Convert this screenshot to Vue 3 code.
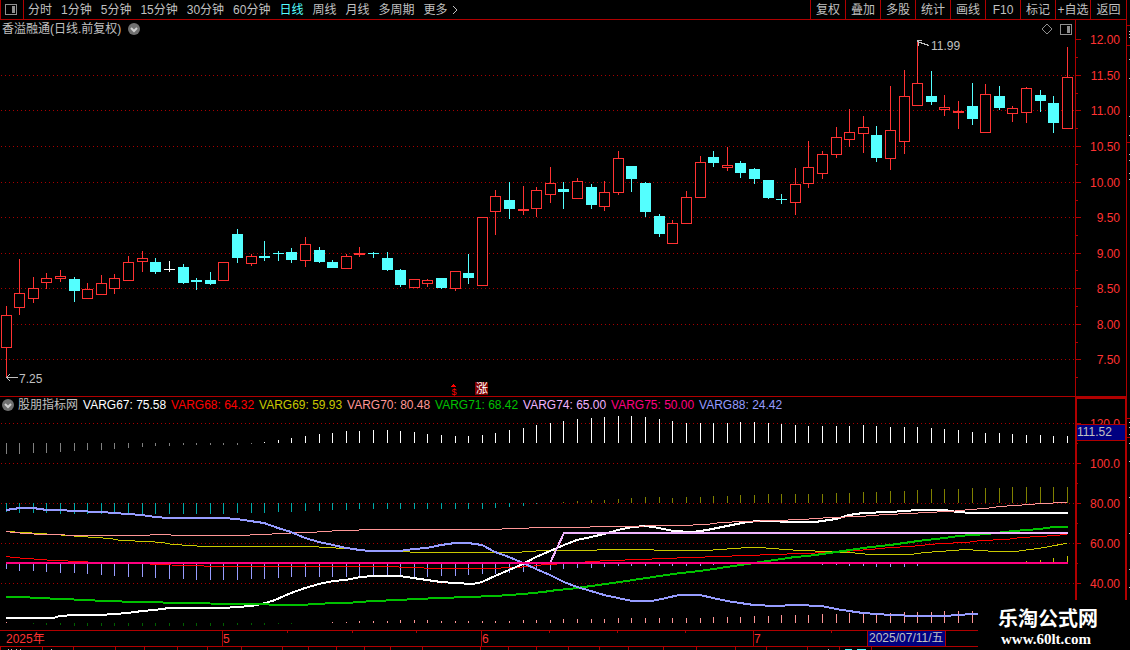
<script setup>
const periods = ['分时', '1分钟', '5分钟', '15分钟', '30分钟', '60分钟', '日线', '周线', '月线', '多周期']
const tools = ['复权', '叠加', '多股', '统计', '画线', 'F10', '标记', '+自选', '返回']

const indicators = [
  { name: 'VARG67', value: '75.58', tone: 'white' },
  { name: 'VARG68', value: '64.32', tone: 'red' },
  { name: 'VARG69', value: '59.93', tone: 'yellow' },
  { name: 'VARG70', value: '80.48', tone: 'salmon' },
  { name: 'VARG71', value: '68.42', tone: 'green' },
  { name: 'VARG74', value: '65.00', tone: 'lilac' },
  { name: 'VARG75', value: '50.00', tone: 'pink' },
  { name: 'VARG88', value: '24.42', tone: 'blue' }
]

const slot = i => Math.floor(6.15 + 13.605 * i)

// kind, high, body top, body bottom, low
const candleRows = [
  ['r', 306, 315, 347, 376], ['r', 259, 293, 307, 314], ['r', 277, 288, 298, 302], ['r', 273, 278, 282, 288],
  ['r', 270, 276, 278, 281], ['c', 277, 279, 291, 302], ['r', 283, 289, 298, 298], ['r', 275, 283, 294, 294],
  ['r', 274, 278, 288, 293], ['r', 256, 262, 280, 280], ['r', 251, 258, 261, 271], ['c', 258, 262, 272, 274],
  ['w', 261, 269, 270, 272], ['c', 264, 267, 283, 284], ['c', 278, 280, 282, 290], ['c', 272, 280, 284, 285],
  ['r', 262, 262, 280, 280], ['c', 229, 234, 258, 263], ['r', 254, 256, 263, 265], ['c', 241, 256, 258, 261],
  ['c', 251, 253, 254, 261], ['c', 248, 252, 260, 263], ['r', 237, 244, 260, 266], ['c', 247, 250, 262, 263],
  ['c', 260, 262, 268, 268], ['r', 254, 256, 268, 268], ['r', 247, 253, 254, 256], ['c', 252, 253, 254, 258],
  ['c', 252, 258, 270, 271], ['c', 269, 270, 285, 287], ['r', 279, 279, 287, 287], ['r', 279, 280, 283, 286],
  ['c', 278, 278, 288, 289], ['r', 271, 271, 288, 290], ['c', 254, 273, 278, 284], ['r', 217, 217, 285, 285],
  ['r', 190, 196, 211, 234], ['c', 182, 200, 209, 219], ['r', 186, 209, 210, 214], ['r', 187, 190, 208, 216],
  ['r', 167, 183, 194, 202], ['c', 182, 189, 192, 209], ['r', 178, 181, 198, 198], ['c', 184, 187, 205, 209],
  ['r', 181, 192, 206, 210], ['r', 151, 158, 192, 194], ['c', 166, 166, 179, 192], ['c', 182, 183, 212, 217],
  ['c', 214, 216, 234, 237], ['r', 220, 223, 243, 243], ['r', 191, 197, 223, 223], ['r', 156, 162, 197, 197],
  ['c', 151, 157, 163, 167], ['r', 147, 165, 167, 170], ['c', 161, 163, 173, 178], ['c', 168, 169, 179, 184],
  ['c', 180, 180, 198, 199], ['c', 194, 199, 200, 204], ['r', 168, 184, 202, 214], ['r', 141, 167, 183, 187],
  ['r', 151, 154, 173, 178], ['r', 127, 137, 154, 157], ['r', 109, 132, 139, 146], ['r', 116, 127, 133, 152],
  ['c', 126, 135, 158, 162], ['r', 86, 130, 158, 169], ['r', 70, 96, 141, 153], ['r', 42, 83, 105, 105],
  ['c', 71, 96, 102, 105], ['r', 95, 107, 109, 115], ['r', 101, 111, 112, 128], ['c', 83, 106, 119, 125],
  ['r', 84, 94, 132, 132], ['c', 86, 96, 108, 110], ['r', 106, 108, 113, 121], ['r', 87, 88, 112, 122],
  ['c', 90, 95, 101, 112], ['c', 96, 103, 123, 133], ['r', 47, 77, 128, 128]
]
const candles = candleRows.map(([kind, high, top, bottom, low], i) => ({ kind, high, top, bottom, low, x: slot(i) }))

const priceTicks = [
  ['12.00', 39], ['11.50', 75], ['11.00', 110], ['10.50', 146], ['10.00', 182],
  ['9.50', 217], ['9.00', 253], ['8.50', 288], ['8.00', 324], ['7.50', 359]
]
const priceMinor = [57, 93, 128, 164, 200, 235, 270, 306, 342, 377]
const levelTicks = [['120.0', 423], ['100.0', 463], ['80.00', 503], ['60.00', 543], ['40.00', 583]]
const levelMinor = [443, 483, 523, 563]

const bars = (tone, base, from, ends) =>
  ends.map((end, k) => ({ tone, x: slot(from + k), y: Math.min(base, end), h: Math.abs(end - base) }))

const histogram = [
  ...bars('gray', 443, 0, [454, 454, 453, 453, 452, 451, 450, 450, 449, 448, 447, 446, 446, 445, 445, 445, 445, 445, 444]),
  ...bars('white', 443, 19, [442, 440, 438, 436, 434, 433, 431, 431, 430, 430, 431, 432, 434, 435, 436, 436, 435, 433, 430, 428,
    425, 423, 421, 419, 418, 417, 416, 416, 417, 419, 421, 423, 423, 423, 423, 422, 422, 423, 424, 425, 426, 426, 426, 426, 425,
    426, 427, 427, 427, 428, 429, 430, 432, 433, 433, 434, 435, 435, 436, 436]),
  ...bars('teal', 503, 0, [512, 513, 513, 513, 514, 514, 514, 514, 514, 514, 514, 514, 514, 514, 514, 514, 514, 513, 513, 513,
    512, 512, 511, 511, 510, 510, 509, 509, 509, 509, 509, 509, 509, 509, 509, 509, 508, 507, 506, 504]),
  ...bars('olive', 503, 41, [502, 501, 500, 500, 499, 498, 497, 497, 498, 497, 497, 496, 496, 495, 495, 494, 494, 494, 494, 494,
    493, 493, 492, 492, 491, 491, 490, 489, 489, 489, 488, 488, 488, 487, 487, 487, 487, 487]),
  ...bars('blue', 563, 0, [569, 571, 571, 572, 573, 573, 574, 575, 576, 577, 577, 578, 579, 579, 580, 580, 580, 580, 579, 579,
    578, 577, 577, 577, 577, 577, 577, 577, 577, 577, 577, 577, 576, 576, 575, 574, 574, 573, 572, 570, 570, 569, 568, 568, 567,
    566, 566, 566, 566, 566, 566, 566, 565]),
  ...bars('blue', 563, 60, [565, 565, 566, 566, 567, 567, 567, 566]),
  ...bars('yellow', 563, 75, [561, 560, 558, 556]),
  ...bars('salmon', 623, 0, [622]),
  ...bars('moss', 623, 2, [624, 625, 625, 626, 626, 626, 626, 626, 626, 626, 626, 626, 626, 626, 626, 625, 625, 625, 624, 624]),
  ...bars('salmon', 623, 24, [622, 622, 621, 621, 621, 620, 620, 620, 621, 621, 621, 621, 621, 621, 620, 620, 620, 619, 619, 619,
    619, 618, 618, 618, 618, 618, 618, 618, 617, 617, 617, 616, 616, 615, 615, 615, 614, 614, 613, 613, 613, 613, 612, 612, 612,
    611, 611, 611])
]

const curves = [
  { tone: 'yellow', w: 1, pts: '6,531 40,533 68,535 80,536 95,537 110,538 121,540 148,541 162,542 173,544 190,545 204,546 285,546 312,546 325,547 346,548 370,550 400,551 420,552 515,552 530,551 543,550 584,550 610,549 652,549 656,550 706,550 720,549 735,548 748,547 760,547 785,549 800,550 830,551 850,552 870,554 910,554 925,552 940,551 965,549 995,551 1015,551 1030,549 1045,547 1060,544 1067,543' },
  { tone: 'red', w: 1, pts: '6,556 13,557 27,558 40,559 54,560 81,561 95,562 148,563 152,564 190,565 217,566 390,566 408,567 440,568 488,568 515,567 530,566 545,564 570,563 590,561 610,560 640,559 690,557 720,556 745,555 775,554 800,553 830,552 870,549 890,547 910,546 940,543 967,542 980,540 1007,539 1020,537 1040,536 1067,534' },
  { tone: 'white', w: 2, pts: '6,618 53,618 60,616 75,615 100,615 114,614 128,613 142,611 155,610 169,608 196,608 223,608 237,607 251,606 262,604 275,600 291,593 305,588 319,584 333,581 346,580 360,577 375,576 400,576 413,578 427,580 441,582 455,583 473,584 482,582 495,576 509,570 523,564 536,557 550,551 564,545 577,540 591,537 604,534 618,530 632,527 646,526 659,528 673,531 693,532 707,530 727,526 747,522 760,521 775,521 785,522 815,522 822,521 836,519 849,515 863,513 890,512 904,511 918,510 945,510 957,512 972,513 1068,513' },
  { tone: 'salmon', w: 1, pts: '6,531 13,532 27,533 40,534 90,535 148,535 152,534 190,535 230,535 270,534 274,533 310,532 340,530 379,529 400,529 488,529 543,527 570,527 611,526 680,525 707,524 720,522 745,521 775,520 802,519 830,517 860,516 885,514 912,513 925,512 950,511 970,509 985,508 1000,506 1030,504 1040,503 1067,502' },
  { tone: 'green', w: 2, pts: '6,597 20,597 60,599 88,600 101,601 142,602 183,603 237,604 300,605 333,603 346,603 373,601 400,600 415,599 441,598 468,597 495,596 523,594 543,592 557,590 570,589 584,587 613,583 633,580 653,577 673,574 700,571 720,568 740,565 768,561 795,557 808,556 822,554 850,550 863,548 890,545 918,541 945,538 958,536 987,534 1013,531 1040,529 1053,527 1068,527' },
  { tone: 'lilac', w: 2, pts: '550,563 564,533 1068,533' },
  { tone: 'blue', w: 2, pts: '6,510 13,509 20,508 33,508 47,510 60,510 74,511 101,512 114,513 128,514 142,515 155,517 169,518 223,518 237,519 250,521 264,523 278,528 291,532 305,538 319,542 333,545 346,548 360,550 370,551 400,551 413,549 427,548 441,545 455,543 468,543 482,545 495,552 509,557 523,563 536,569 550,575 564,582 577,587 591,591 604,595 618,598 632,601 652,601 666,598 679,595 700,595 713,598 727,601 740,603 754,605 775,606 795,605 822,606 836,609 849,611 863,613 877,614 890,615 917,616 945,616 958,615 972,614 980,614' },
  { tone: 'pink', w: 2, pts: '6,563 1068,563' }
]

const months = [['5', 222], ['6', 481], ['7', 753]]
const weekTicks = [287, 352, 416, 549, 617, 685, 831]
const rulerTicks = [0, 42, 73, 115, 144, 177, 207, 241, 282, 308, 336, 364, 390, 422, 480, 508, 536, 568, 599, 628, 663, 696, 735, 766, 807, 839, 871]
</script>

<template>
  <main class="terminal">
    <header class="topbar">
      <button class="layout-btn" type="button" aria-label="布局">
        <svg width="12" height="11" viewBox="0 0 12 11" shape-rendering="crispEdges">
          <rect x="0.5" y="0.5" width="11" height="10" rx="1" class="icon-line" />
          <rect x="7" y="2" width="3" height="7" class="icon-fill" />
        </svg>
      </button>
      <nav class="periods">
        <button v-for="p in periods" :key="p" type="button" :class="{ active: p === '日线' }">{{ p }}</button>
        <button type="button" class="more">更多
          <svg width="6" height="10" viewBox="0 0 6 10"><path d="M1 1 L5 5 L1 9" class="more-line" /></svg>
        </button>
      </nav>
      <div class="tools">
        <button v-for="t in tools" :key="t" type="button">{{ t }}</button>
      </div>
    </header>

    <section class="panel">
      <div class="caption">
        <h1>香溢融通(日线.前复权)</h1>
        <button type="button" class="round" aria-label="展开">
          <svg width="12" height="12" viewBox="0 0 12 12"><circle cx="6" cy="6" r="6" class="disc" /><path d="M3 5 L6 8 L9 5" class="tickmark" /></svg>
        </button>
        <div class="corner">
          <svg width="12" height="12" viewBox="0 0 12 12"><path d="M6 1 L11 6 L6 11 L1 6 Z" class="icon-line" /></svg>
          <svg width="12" height="11" viewBox="0 0 12 11" shape-rendering="crispEdges">
            <rect x="0.5" y="0.5" width="11" height="10" rx="1" class="icon-line" />
            <rect x="7" y="2" width="3" height="7" class="icon-fill" />
          </svg>
        </div>
      </div>
      <svg class="chart" viewBox="0 20 1130 377" shape-rendering="crispEdges">
        <line v-for="t in priceTicks.slice(1)" :key="t[0]" x1="1" x2="1075" :y1="t[1] + 0.5" :y2="t[1] + 0.5" class="grid" />
        <g v-for="c in candles" :key="c.x" :class="'k-' + c.kind">
          <rect class="wick" :x="c.x" :y="c.high" width="1" :height="c.low - c.high + (c.kind === 'r' ? 1 : 0)" />
          <rect v-if="c.kind === 'r'" class="body" :x="c.x - 4.5" :y="c.top + 0.5" width="10" :height="c.bottom - c.top" />
          <rect v-else class="body" :x="c.x - 5" :y="c.top" width="11" :height="c.bottom - c.top" />
        </g>
        <path d="M6 377.5 H18 M7 377 L10 374 M7 378 L10 381" class="pointer" />
        <text x="19" y="383" class="note">7.25</text>
        <path d="M917 41.5 L929 45.5 M917 40.5 H922 M918 41 V46" class="pointer" />
        <text x="931" y="50" class="note">11.99</text>
        <path d="M453 384 H454 V385 H455 V386 H456 V387 H451 V386 H452 V385 H453 Z" class="flag" />
        <text x="454" y="395" class="dollar">$</text>
        <path d="M475 382 H486 L488 384 V395 H475 Z" class="rise-box" />
        <text x="482" y="393" class="rise">涨</text>
        <rect x="1075" y="20" width="1" height="377" class="rule" />
        <g v-for="t in priceTicks" :key="'p' + t[0]">
          <rect x="1076" :y="t[1]" width="5" height="1" class="rule" />
          <text x="1120" :y="t[1] + 5" class="scale">{{ t[0] }}</text>
        </g>
        <rect v-for="y in priceMinor" :key="'m' + y" x="1076" :y="y" width="2" height="1" class="rule" />
        <rect x="1126" y="20" width="1" height="377" class="rule" />
        <rect x="0" y="396" width="1127" height="1" class="rule" />
        <path d="M1127 25.5 H1130 M1127 45.5 H1130 M1127 142.5 H1130" class="edge" />
        <path d="M1129.5 31 V32 M1129.5 34 V35 M1129.5 37 V38 M1129.5 59 V60 M1129.5 78 V79 M1129.5 116 V117 M1129.5 135 V136 M1129.5 154 V155 M1129.5 160 V161 M1129.5 173 V174 M1129.5 179 V180" class="specks" />
      </svg>
    </section>

    <section class="panel">
      <div class="caption lower">
        <button type="button" class="round" aria-label="指标菜单">
          <svg width="12" height="12" viewBox="0 0 12 12"><circle cx="6" cy="6" r="6" class="disc" /><path d="M3 5 L6 8 L9 5" class="tickmark" /></svg>
        </button>
        <h2>股朋指标网</h2>
        <ul class="legend">
          <li v-for="i in indicators" :key="i.name" :class="'t-' + i.tone">{{ i.name }}: {{ i.value }}</li>
        </ul>
      </div>
      <svg class="chart" viewBox="0 397 1130 253" shape-rendering="crispEdges">
        <line v-for="t in levelTicks" :key="t[0]" x1="1" x2="1075" :y1="t[1] + 0.5" :y2="t[1] + 0.5" class="grid" />
        <rect v-for="(b, n) in histogram" :key="n" :x="b.x" :y="b.y" width="1" :height="b.h" :class="'f-' + b.tone" />
        <polyline
          v-for="c in curves"
          :key="c.tone"
          :points="c.pts"
          :stroke-width="c.w"
          :transform="c.w === 1 ? 'translate(0 0.5)' : undefined"
          :class="'curve s-' + c.tone"
        />

        <g v-for="t in levelTicks" :key="'l' + t[0]">
          <rect x="1077" :y="t[1]" width="4" height="1" class="rule" />
          <text x="1120" :y="t[1] + 5" class="scale">{{ t[0] }}</text>
        </g>
        <rect v-for="y in levelMinor" :key="'n' + y" x="1077" :y="y" width="1" height="1" class="rule" />
        <rect x="1077" y="424" width="48" height="17" class="navy" />
        <path d="M1077 424.5 H1125 M1077 440.5 H1125" class="edge" />
        <path d="M1075 397 H1127 V600 H1125 V399 H1077 V600 H1075 Z" class="rule" />
        <text x="1077" y="436" class="note">111.52</text>
        <path d="M1127 418.5 H1130 M1127 437.5 H1130" class="edge" />
        <path d="M1129.5 422 V423 M1129.5 427 V428 M1129.5 434 V435 M1129.5 443 V444 M1129.5 461 V462 M1129.5 497 V498 M1129.5 533 V534 M1129.5 569 V570 M1129.5 587 V588" class="specks" />

        <path d="M0 630.5 H1130 M0 646.5 H1130" class="edge" />
        <rect v-for="x in weekTicks" :key="'w' + x" :x="x" y="631" width="1" height="2" class="rule" />
        <rect v-for="x in rulerTicks" :key="'r' + x" :x="x" y="647" width="1" height="3" class="rule" />
        <text x="6" y="643" class="stamp">2025年</text>
        <g v-for="m in months" :key="'mo' + m[0]">
          <rect :x="m[1]" y="631" width="1" height="15" class="rule" />
          <text :x="m[1] + 1" y="643" class="stamp">{{ m[0] }}</text>
        </g>
        <rect x="867" y="630" width="79" height="17" class="rule" />
        <rect x="868" y="631" width="77" height="15" class="navy" />
        <text x="869" y="642" class="note">2025/07/11/五</text>
        <path d="M8 649.5 H9 M11 649.5 H12 M16 649.5 H17 M20 649.5 H21 M51 649.5 H52 M828 649.5 H829" class="specks" />
        <path d="M845 649.5 H852 M857 649.5 H866" class="cyan-specks" />
      </svg>
      <a class="badge" href="#">
        <strong>乐淘公式网</strong>
        <span>www.60lt.com</span>
      </a>
    </section>
  </main>
</template>

<style>
html,
body {
  margin: 0;
  background: #000;
}
</style>

<style scoped>
.terminal {
  min-height: 100vh;
  overflow: hidden;
  background: #000;
  color: #c0c0c0;
  font: 12px/18px "Liberation Sans", "Noto Sans CJK SC", sans-serif;
}
button {
  margin: 0;
  padding: 0;
  border: 0;
  background: none;
  color: inherit;
  font: inherit;
  white-space: nowrap;
}
svg {
  display: block;
}
.topbar {
  display: flex;
  height: 19px;
  margin-right: 3px;
  border: solid #b00000;
  border-width: 0 1px 1px;
}
.layout-btn {
  display: flex;
  align-items: center;
  padding: 0 6px 1px 4px;
  border-right: 1px solid #b00000;
}
.periods {
  display: flex;
  flex: 1;
  gap: 9px;
  padding-left: 4px;
}
.active {
  color: #54ffff;
}
.more {
  display: flex;
  align-items: center;
  gap: 4px;
}
.more-line {
  fill: none;
  stroke: #c0c0c0;
}
.tools {
  display: grid;
  grid-template-columns: repeat(8, 35px) 36px;
}
.tools button {
  border-left: 1px solid #b00000;
}
.panel {
  position: relative;
}
.chart {
  width: 100%;
  height: auto;
}
.caption {
  position: absolute;
  inset: 0 54px auto 0;
  display: flex;
  align-items: center;
  height: 18px;
  padding-left: 2px;
}
.caption h1,
.caption h2 {
  margin: 0;
  font-size: 12px;
  font-weight: normal;
}
.caption h1 {
  margin-right: 7px;
}
.lower h2 {
  margin: 0 5px 0 4px;
}
.lower {
  height: 16px;
}
.corner {
  display: flex;
  align-items: center;
  gap: 7px;
  margin-left: auto;
  padding-right: 4px;
}
.legend {
  display: grid;
  grid-template-columns: repeat(8, 88px);
  margin: 0;
  padding: 0;
  list-style: none;
  white-space: nowrap;
}
.icon-line {
  fill: none;
  stroke: #909090;
}
.icon-fill {
  fill: #909090;
}
.disc {
  fill: #707070;
}
.tickmark {
  fill: none;
  stroke: #d0d0d0;
  stroke-width: 2;
}
.grid {
  stroke: #a80000;
  stroke-dasharray: 1 3;
}
.rule {
  fill: #b00000;
}
.edge {
  fill: none;
  stroke: #b00000;
}
.specks {
  stroke: #c0c0c0;
}
.cyan-specks {
  stroke: #54ffff;
}
.navy {
  fill: #000080;
}
.k-r .wick {
  fill: #ff3232;
}
.k-r .body {
  fill: #000;
  stroke: #ff3232;
}
.k-c rect {
  fill: #54ffff;
}
.k-w rect {
  fill: #fff;
}
.pointer {
  fill: none;
  stroke: #c0c0c0;
}
.note {
  fill: #c0c0c0;
}
.scale,
.stamp {
  fill: #ff3232;
}
.scale {
  text-anchor: end;
}
.flag {
  fill: #f00;
}
.dollar {
  fill: #f00;
  font-size: 9px;
  text-anchor: middle;
}
.rise-box {
  fill: #800000;
}
.rise {
  fill: #fff;
  font-size: 12px;
  text-anchor: middle;
}
.curve {
  fill: none;
}
.t-white { color: #fff; }
.t-red { color: #f00; }
.t-yellow { color: #c8c800; }
.t-salmon { color: #ff9696; }
.t-green { color: #00c000; }
.t-lilac { color: #f0b4ff; }
.t-pink { color: #ff0080; }
.t-blue { color: #969cff; }
.s-white { stroke: #fff; }
.s-red { stroke: #f00; }
.s-yellow { stroke: #c8c800; }
.s-salmon { stroke: #ff9696; }
.s-green { stroke: #00c000; }
.s-lilac { stroke: #f0b4ff; }
.s-pink { stroke: #ff0080; }
.s-blue { stroke: #969cff; }
.f-gray { fill: #808080; }
.f-white { fill: #fff; }
.f-teal { fill: #00a8a8; }
.f-olive { fill: #808000; }
.f-blue { fill: #969cff; }
.f-yellow { fill: #c8c800; }
.f-salmon { fill: #ff9696; }
.f-moss { fill: #006000; }
.badge {
  position: absolute;
  right: 0;
  bottom: 0;
  display: flex;
  flex-direction: column;
  width: 132px;
  height: 44px;
  padding: 6px 0 0 20px;
  background: #000;
  color: #fff;
  text-decoration: none;
}
.badge strong {
  font: bold 20px/24px "Noto Sans CJK SC", sans-serif;
}
.badge span {
  padding-left: 3px;
  font: bold 15px/18px "Liberation Serif", serif;
}
</style>
